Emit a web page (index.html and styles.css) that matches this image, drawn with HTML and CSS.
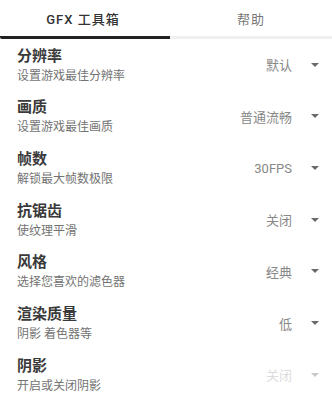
FILE: index.html
```html
<!DOCTYPE html>
<html lang="zh">
<head>
<meta charset="utf-8">
<link rel="stylesheet" href="styles.css">
</head>
<body>
<div class="tabs">
  <div class="tab active">GFX 工具箱</div>
  <div class="tab">帮助</div>
</div>
<div class="list">
  <div class="row">
    <div class="text"><div class="title">分辨率</div><div class="sub">设置游戏最佳分辨率</div></div>
    <div class="value">默认</div><span class="arrow"></span>
  </div>
  <div class="row">
    <div class="text"><div class="title">画质</div><div class="sub">设置游戏最佳画质</div></div>
    <div class="value">普通流畅</div><span class="arrow"></span>
  </div>
  <div class="row">
    <div class="text"><div class="title">帧数</div><div class="sub">解锁最大帧数极限</div></div>
    <div class="value">30FPS</div><span class="arrow"></span>
  </div>
  <div class="row">
    <div class="text"><div class="title">抗锯齿</div><div class="sub">使纹理平滑</div></div>
    <div class="value">关闭</div><span class="arrow"></span>
  </div>
  <div class="row">
    <div class="text"><div class="title">风格</div><div class="sub">选择您喜欢的滤色器</div></div>
    <div class="value">经典</div><span class="arrow"></span>
  </div>
  <div class="row">
    <div class="text"><div class="title">渲染质量</div><div class="sub">阴影 着色器等</div></div>
    <div class="value">低</div><span class="arrow"></span>
  </div>
  <div class="row disabled">
    <div class="text"><div class="title">阴影</div><div class="sub">开启或关闭阴影</div></div>
    <div class="value">关闭</div><span class="arrow"></span>
  </div>
</div>
</body>
</html>
```
FILE: styles.css
```css
html, body {
  margin: 0;
  padding: 0;
  background: #fff;
  font-family: Roboto, "Noto Sans CJK SC", sans-serif;
}
.tabs {
  display: flex;
  height: 39px;
  border-bottom: 3px solid #f0f0f0;
  box-sizing: border-box;
}
.tab {
  flex: 1;
  display: flex;
  align-items: center;
  justify-content: center;
  font-size: 13px;
  letter-spacing: 1px;
  color: #777;
  padding-bottom: 3px;
  box-sizing: border-box;
  margin-bottom: -3px;
}
.tab.active {
  color: #333;
  font-weight: 500;
  border-bottom: 3px solid #222;
  border-radius: 2px 0 0 2px;
  padding-bottom: 0;
  flex: 0 0 170px;
  padding-right: 4px;
}
.list {
  padding: 0 12px 0 17px;
}
.row {
  height: 51.67px;
  display: flex;
  align-items: center;
}
.text {
  flex: 1;
}
.title {
  font-size: 15px;
  line-height: 20px;
  font-weight: 700;
  color: #3a3a3a;
}
.sub {
  font-size: 12px;
  line-height: 16px;
  margin-top: 2px;
  color: #737373;
}
.value {
  font-size: 13px;
  color: #888;
  margin-right: 19px;
}
.arrow {
  width: 0;
  height: 0;
  border-left: 4px solid transparent;
  border-right: 4px solid transparent;
  border-top: 4px solid #6a6a6a;
  margin-right: 1px;
}
.disabled .value {
  color: #dcdcdc;
}
.disabled .arrow {
  border-top-color: #c8c8c8;
}
```
